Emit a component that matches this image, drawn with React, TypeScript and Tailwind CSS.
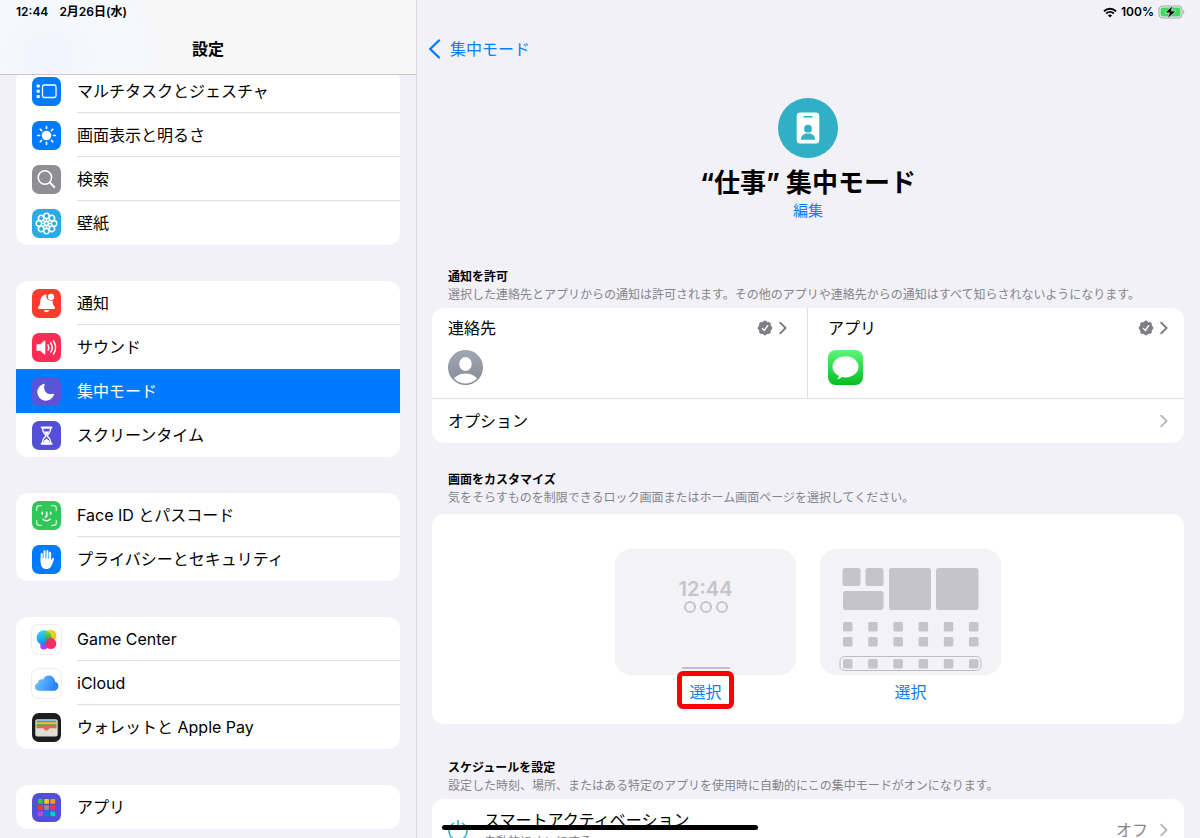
import React from "react";
import clsx from "clsx";

interface SidebarItem {
  label: string;
  icon: React.ReactNode;
  bg: string;
  selected?: boolean;
}

const MultitaskIcon = () => (
  <svg viewBox="0 0 29 29" className="size-full" fill="none">
    <rect x="10.5" y="8" width="13.5" height="12.5" rx="1.8" stroke="#fff" strokeWidth="1.3" />
    <g fill="#fff">
      <rect x="4.6" y="7.6" width="3.2" height="3" rx="0.8" />
      <rect x="4.6" y="12.8" width="3.2" height="3" rx="0.8" />
      <rect x="4.6" y="18" width="3.2" height="3" rx="0.8" />
    </g>
  </svg>
);

const BrightnessIcon = () => (
  <svg viewBox="0 0 29 29" className="size-full">
    <circle cx="14.5" cy="14.5" r="4.8" fill="#fff" />
    <g stroke="#fff" strokeWidth="1.6" strokeLinecap="round">
      {[0, 45, 90, 135, 180, 225, 270, 315].map((angle) => (
        <path key={angle} d="M14.5 5.6v2" transform={`rotate(${angle} 14.5 14.5)`} />
      ))}
    </g>
  </svg>
);

const SearchIcon = () => (
  <svg viewBox="0 0 29 29" className="size-full" fill="none" stroke="#fff" strokeLinecap="round">
    <circle cx="12.9" cy="12.5" r="6.7" strokeWidth="1.6" />
    <path d="M17.9 17.6l4.4 4.4" strokeWidth="2" />
  </svg>
);

const WallpaperIcon = () => (
  <svg viewBox="0 0 29 29" className="size-full" fill="none" stroke="#fff">
    {[0, 45, 90, 135, 180, 225, 270, 315].map((angle) => (
      <g key={angle} transform={`rotate(${angle} 14.5 14.5)`}>
        <circle cx="14.5" cy="6.9" r="2.7" strokeWidth="1.5" />
        <path d="M14.5 9.6v3.4" strokeWidth="1.6" />
      </g>
    ))}
    <circle cx="14.5" cy="14.5" r="1.9" strokeWidth="1.3" />
  </svg>
);

const BellIcon = () => (
  <svg viewBox="0 0 29 29" className="size-full">
    <path
      d="M14 5.6c-4 .6-5.5 3.3-5.6 6.4-.1 3.5-.9 4.6-2.1 6-.7.9-.3 1.900.7 1.900h15c1 0 1.400-1 .7-1.900-1.400-1.600-2.100-3-2.100-6.200L19 11.500c-3 .5-5.300-2.200-4.400-5.900z"
      fill="#fff"
    />
    <circle cx="19" cy="7.9" r="3.100" fill="#fff" />
    <path d="M11.800 21.300h5.400c-.3 1.300-1.400 2-2.700 2s-2.400-.7-2.700-2z" fill="#fff" />
  </svg>
);

const SoundIcon = () => (
  <svg viewBox="0 0 29 29" className="size-full" fill="none" stroke="#fff" strokeLinecap="round">
    <path
      d="M4.5 12.300c0-.6.4-1 1-1h2.700l4-3.500c.5-.4 1.100-.1 1.100.5v12.400c0 .6-.6.9-1.100.5l-4-3.500H5.500c-.6 0-1-.4-1-1z"
      fill="#fff"
      stroke="none"
    />
    <path
      d="M16 11.800c.9 1.600.9 3.800 0 5.400M18.700 9.900c1.800 2.800 1.800 6.400 0 9.200M21.500 8c2.600 4 2.600 9 0 13"
      strokeWidth="1.5"
    />
  </svg>
);

const MoonIcon = () => (
  <svg viewBox="0 0 29 29" className="size-full">
    <path
      d="M12 6.7c.5-.2.9.2.7.7-2.3 5.800 2.500 11.300 8.700 9.300.6-.2 1 .3.700.8A8.600 8.600 0 1 1 12 6.700z"
      fill="#fff"
    />
  </svg>
);

const HourglassIcon = () => (
  <svg viewBox="0 0 29 29" className="size-full" fill="none">
    <path d="M9.800 6.500h9.600M9.800 22.700h9.600" stroke="#fff" strokeWidth="2.2" strokeLinecap="round" />
    <path
      d="M10.600 6.800c0 4 .7 5 3.100 7.100v1.500c-2.400 2-3.100 3-3.100 7.100h8c0-4.100-.7-5.100-3.100-7.100v-1.500c2.400-2.100 3.100-3.100 3.100-7.100z"
      stroke="#fff"
      strokeWidth="1.5"
    />
    <path d="M11.800 10.600h5.600l-2.400 3h-.8zM14.600 17.600l2.800 2.400v1.700h-5.600V20z" fill="#fff" />
  </svg>
);

const FaceIdIcon = () => (
  <svg viewBox="0 0 29 29" className="size-full" fill="none" stroke="#fff" strokeLinecap="round">
    <path
      d="M4.700 9.500V7.200c0-1.500 1-2.500 2.500-2.500h2.300M19.500 4.700h2.300c1.500 0 2.500 1 2.500 2.500v2.300M24.300 19.500v2.300c0 1.500-1 2.500-2.500 2.500h-2.300M9.500 24.300H7.200c-1.500 0-2.500-1-2.500-2.500v-2.300"
      strokeWidth="1.3"
      opacity="0.75"
    />
    <path
      d="M10.300 11.200v1.700M18.700 11.200v1.700M14.700 11.200v3.700c0 .7-.3 1-1.200 1M11 18.300c1.900 1.900 5.100 1.900 7 0"
      strokeWidth="1.6"
    />
  </svg>
);

const HandIcon = () => (
  <svg viewBox="0 0 29 29" className="size-full" fill="none" stroke="#fff" strokeLinecap="round">
    <path d="M9.700 9v8M12.500 6.300v9M15.400 6v9M18.100 7.900v8" strokeWidth="2.1" />
    <path
      d="M8.700 13v4.500c0 4 2 6.500 5.600 6.500 3 0 4.600-1.300 5.600-4l2.200-5.700c.4-1.200-1.200-1.800-1.900-.8l-1.500 2.300V14z"
      fill="#fff"
      stroke="none"
    />
  </svg>
);

const GameCenterIcon = () => (
  <svg viewBox="0 0 29 29" className="size-full">
    <defs>
      <linearGradient id="gcBlue" x1="0" y1="0" x2="0.3" y2="1">
        <stop offset="0" stopColor="#35dfe5" />
        <stop offset="1" stopColor="#1788f5" />
      </linearGradient>
      <linearGradient id="gcYellow" x1="0" y1="0" x2="1" y2="1">
        <stop offset="0" stopColor="#e3ef22" />
        <stop offset="1" stopColor="#ffb016" />
      </linearGradient>
      <linearGradient id="gcGreen" x1="0" y1="0" x2="0" y2="1">
        <stop offset="0" stopColor="#8ee52e" />
        <stop offset="1" stopColor="#239b56" />
      </linearGradient>
      <clipPath id="gcClip">
        <circle cx="12" cy="12.7" r="7.400" />
      </clipPath>
    </defs>
    <circle cx="11.800" cy="21" r="3.600" fill="#a63ff5" />
    <circle cx="18.500" cy="10.300" r="5.900" fill="url(#gcYellow)" />
    <circle cx="12" cy="12.700" r="7.400" fill="url(#gcBlue)" />
    <circle cx="18.500" cy="10.300" r="5.900" fill="url(#gcGreen)" clipPath="url(#gcClip)" />
    <circle cx="18.800" cy="18.600" r="5.500" fill="#ff2d62" />
    <path
      d="M13.600 17.200c1.100-3.300 4.500-4.800 8-3.300-1.600 2.800-4 4.600-7.700 5.800z"
      fill="#c93b64"
      opacity="0.6"
    />
  </svg>
);

const CloudIcon = () => (
  <svg viewBox="0 0 29 29" className="size-full">
    <defs>
      <linearGradient id="cloud" x1="0" y1="0" x2="1" y2="0.3">
        <stop offset="0" stopColor="#7cc9ff" />
        <stop offset="1" stopColor="#2584f7" />
      </linearGradient>
    </defs>
    <path
      d="M7.300 21.800c-2.500 0-4.400-1.700-4.400-4.100 0-2 1.300-3.500 3.100-4 .1-2.500 2.600-4.200 5-3.300 1.200-2.300 3.200-3.800 5.700-3.800 3.600 0 6.300 2.700 6.400 6.200 2 .5 3.300 2.200 3.300 4.400 0 2.600-2 4.600-4.600 4.600z"
      fill="url(#cloud)"
    />
  </svg>
);

const WalletIcon = () => (
  <svg viewBox="0 0 29 29" className="size-full">
    <rect x="3.300" y="6.300" width="22.400" height="17.200" rx="2" fill="#e0ddd2" />
    <path d="M4.500 9.800v-1c0-.8.500-1.300 1.300-1.300h17.400c.8 0 1.300.5 1.300 1.300v1z" fill="#329fe5" />
    <path d="M4.500 9.300h20V12h-20z" fill="#f9b91c" />
    <path d="M4.500 11.300h20V14h-20z" fill="#4caf4b" />
    <path
      d="M4.500 13.300h20v1.900h-6.200c-1 0-1.100.5-1.500 1.100-.6.900-1.300 1.200-2.300 1.200s-1.700-.3-2.300-1.200c-.4-.6-.5-1.100-1.500-1.100H4.500z"
      fill="#f06258"
    />
  </svg>
);

const appColors = [
  "#30c452", "#f9c80e", "#f99b10",
  "#ff3b20", "#8e8e93", "#ff2d50",
  "#b34be2", "#087cf5", "#09cbd0",
];

const AppsIcon = () => (
  <svg viewBox="0 0 29 29" className="size-full">
    {appColors.map((color, i) => (
      <rect
        key={color}
        x={6 + (i % 3) * 6.2}
        y={6 + Math.floor(i / 3) * 6.2}
        width="4.800"
        height="4.800"
        rx="0.800"
        fill={color}
      />
    ))}
  </svg>
);

const groups: SidebarItem[][] = [
  [
    { label: "マルチタスクとジェスチャ", icon: <MultitaskIcon />, bg: "bg-[#007aff]" },
    { label: "画面表示と明るさ", icon: <BrightnessIcon />, bg: "bg-[#007aff]" },
    { label: "検索", icon: <SearchIcon />, bg: "bg-[#8e8e93]" },
    { label: "壁紙", icon: <WallpaperIcon />, bg: "bg-[#2caae2]" },
  ],
  [
    { label: "通知", icon: <BellIcon />, bg: "bg-[#ff3b30]" },
    { label: "サウンド", icon: <SoundIcon />, bg: "bg-[#ff2d55]" },
    { label: "集中モード", icon: <MoonIcon />, bg: "bg-[#5856d6]", selected: true },
    { label: "スクリーンタイム", icon: <HourglassIcon />, bg: "bg-[#5450d6]" },
  ],
  [
    { label: "Face ID とパスコード", icon: <FaceIdIcon />, bg: "bg-[#30c759]" },
    { label: "プライバシーとセキュリティ", icon: <HandIcon />, bg: "bg-[#007aff]" },
  ],
  [
    { label: "Game Center", icon: <GameCenterIcon />, bg: "bg-white ring-1 ring-[#efedf0]" },
    { label: "iCloud", icon: <CloudIcon />, bg: "bg-white ring-1 ring-[#efedf0]" },
    { label: "ウォレットと Apple Pay", icon: <WalletIcon />, bg: "bg-[#1d1d1f]" },
  ],
  [{ label: "アプリ", icon: <AppsIcon />, bg: "bg-[#5450d6]" }],
];

const Chevron = ({ className }: { className?: string }) => (
  <svg viewBox="0 0 8 14" className={clsx("w-2 h-3.5 shrink-0", className)} fill="none">
    <path
      d="M1.200 1.700L6.600 7l-5.400 5.300"
      stroke="currentColor"
      strokeWidth="1.8"
      strokeLinecap="round"
      strokeLinejoin="round"
    />
  </svg>
);

const VerifiedBadge = () => (
  <svg viewBox="0 0 16 16" className="size-4 shrink-0">
    <g fill="#7f7f84">
      <circle cx="8" cy="8" r="6.300" />
      {[0, 45, 90, 135, 180, 225, 270, 315].map((angle) => (
        <circle key={angle} cx="8" cy="2.700" r="2.100" transform={`rotate(${angle} 8 8)`} />
      ))}
    </g>
    <path
      d="M5.400 8.400l1.900 2.100 3.300-4.800"
      fill="none"
      stroke="#fff"
      strokeWidth="1.4"
      strokeLinecap="round"
      strokeLinejoin="round"
    />
  </svg>
);

const StatusIcons = () => (
  <div className="flex items-center gap-1 text-[12px] font-semibold">
    <svg viewBox="0 0 14 11" className="w-3.5 h-[11px]" fill="none" stroke="#000">
      <path d="M1 4.200C4.400.9 9.600.9 13 4.200" strokeWidth="1.9" />
      <path d="M3.200 6.500c2.200-2 5.400-2 7.600 0" strokeWidth="1.9" />
      <path d="M7 10.600L4.900 8.400c1.200-1.100 3-1.100 4.200 0z" fill="#000" stroke="none" />
    </svg>
    <span>100%</span>
    <svg viewBox="0 0 27 14" className="w-[27px] h-3.5">
      <rect x="1" y="1" width="23" height="12" rx="3.600" fill="none" stroke="#a5a5a9" />
      <rect x="2.500" y="2.500" width="20" height="9" rx="2.300" fill="#3fdc62" />
      <path d="M25.200 5c1.400.5 1.400 3.500 0 4z" fill="#a5a5a9" />
      <path
        d="M15 .4L7 7.800h4.500L9.500 13.600l8.400-7.500h-4.700z"
        fill="#000"
        stroke="#f2f1f7"
        strokeWidth="0.6"
      />
    </svg>
  </div>
);

const SidebarRow = ({ item, divider }: { item: SidebarItem; divider: boolean }) => (
  <a
    href="#"
    aria-current={item.selected ? "page" : undefined}
    className={clsx("flex h-11 items-center gap-4 pl-4", item.selected && "bg-[#007aff] text-white")}
  >
    <span className={clsx("block size-[29px] shrink-0 overflow-hidden rounded-[7px]", item.bg)}>
      {item.icon}
    </span>
    <span
      className={clsx(
        "flex h-full flex-1 items-center border-b",
        divider ? "border-[#dedee1]" : "border-transparent"
      )}
    >
      {item.label}
    </span>
  </a>
);

const Sidebar = () => (
  <aside className="flex w-[416px] shrink-0 flex-col overflow-hidden">
    <header className="z-10 shrink-0 border-b border-[#c9c9cd] bg-[#f7f7f8] bg-[radial-gradient(circle_at_48px_56px,#eff5fe_0,#f5f8fc_50px,#f7f7f8_120px)]">
      <div className="flex h-6 items-center gap-[11px] pl-4 text-[12px] font-semibold">
        <span>12:44</span>
        <span>2月26日(水)</span>
      </div>
      <h1 className="flex h-[50px] items-center justify-center text-[16px] font-bold">設定</h1>
    </header>
    <nav className="-mt-1.5 flex flex-col gap-9 px-4">
      {groups.map((group, g) => (
        <div key={g} className="overflow-hidden rounded-xl bg-white">
          {group.map((item, i) => (
            <SidebarRow
              key={item.label}
              item={item}
              divider={i < group.length - 1 && !item.selected && !group[i + 1].selected}
            />
          ))}
        </div>
      ))}
    </nav>
  </aside>
);

const SectionTitle = ({ title, text }: { title: string; text: string }) => (
  <div className="px-4 text-[12px] leading-[18px]">
    <h3 className="font-bold">{title}</h3>
    <p className="whitespace-nowrap text-[#85858b]">{text}</p>
  </div>
);

const LockScreenPreview = () => (
  <div className="flex h-[126px] w-[181px] flex-col items-center rounded-2xl bg-[#f3f3f5] pt-7">
    <div className="text-[20px] leading-6 font-semibold text-[#c5c4ca]">12:44</div>
    <div className="flex gap-1">
      <span className="size-3 rounded-full border-2 border-[#c5c4ca]" />
      <span className="size-3 rounded-full border-2 border-[#c5c4ca]" />
      <span className="size-3 rounded-full border-2 border-[#c5c4ca]" />
    </div>
    <div className="mt-auto mb-1.5 h-0.5 w-12 bg-[#b9c2ce]" />
  </div>
);

const HomeScreenPreview = () => (
  <div className="h-[126px] w-[181px] rounded-2xl bg-[#f3f3f5]">
    <svg viewBox="0 0 181 126" className="size-full" fill="#c5c4cb">
      <rect x="22.500" y="19" width="18" height="18" rx="2.500" />
      <rect x="45.500" y="19" width="18" height="18" rx="2.500" />
      <rect x="23" y="42" width="40.500" height="19" rx="2.500" />
      <rect x="69" y="19" width="42" height="42" rx="2.500" />
      <rect x="116" y="19" width="42.500" height="42" rx="2.500" />
      {[73, 88, 110].map((y) =>
        [0, 1, 2, 3, 4, 5].map((col) => (
          <rect key={`${y}-${col}`} x={23 + col * 25.2} y={y} width="9.500" height="9.500" rx="1.500" />
        ))
      )}
      <rect x="20" y="107.500" width="141" height="14" rx="4.500" fill="none" stroke="#bdbcc3" />
    </svg>
  </div>
);

const App = () => {
  return (
    <div
      lang="ja"
      className="relative flex h-screen overflow-hidden bg-[#f2f1f7] font-[Inter,'Noto_Sans_CJK_JP',sans-serif] text-[16px] text-black"
    >
      <Sidebar />
      <main className="flex min-w-0 flex-1 flex-col shadow-[inset_1px_0_0_#d9d9de]">
        <div className="flex h-6 shrink-0 items-center justify-end pr-[15px]">
          <StatusIcons />
        </div>
        <div className="flex h-[50px] shrink-0 items-center pl-3">
          <a href="#" className="flex items-center gap-[9px] text-[#087cff]">
            <svg viewBox="0 0 13 20" className="h-5 w-[13px]" fill="none">
              <path
                d="M11 1.500L2.200 10l8.800 8.500"
                stroke="currentColor"
                strokeWidth="2.4"
                strokeLinecap="round"
                strokeLinejoin="round"
              />
            </svg>
            集中モード
          </a>
        </div>

        <div className="px-4 pt-6">
          <div className="flex flex-col items-center">
            <svg viewBox="0 0 60 60" className="size-[60px]">
              <circle cx="30" cy="30" r="30" fill="#30afc6" />
              <rect x="18.700" y="14.500" width="22.600" height="31" rx="3.500" fill="#fff" />
              <path d="M26 18.800h8" stroke="#30afc6" strokeWidth="1.5" strokeLinecap="round" />
              <circle cx="30" cy="30.700" r="3.900" fill="#30afc6" />
              <path d="M22.800 41.800c.4-4.500 3-6.300 7.200-6.300s6.800 1.800 7.200 6.300z" fill="#30afc6" />
            </svg>
            <h2 className="mt-2 text-[26px] leading-[34px] font-bold">“仕事” 集中モード</h2>
            <button className="mt-px text-[15px] leading-5 text-[#087cff]">編集</button>
          </div>

          <section className="mt-[47px] flex flex-col gap-1">
            <SectionTitle
              title="通知を許可"
              text="選択した連絡先とアプリからの通知は許可されます。その他のアプリや連絡先からの通知はすべて知らされないようになります。"
            />
            <div className="overflow-hidden rounded-xl bg-white">
              <div className="grid grid-cols-2 border-b border-[#dedee1]">
                <button className="flex h-[90px] flex-col gap-2.5 border-r border-[#dedee1] pt-2 pr-5 pl-4 text-start">
                  <span className="flex w-full items-center gap-1.5">
                    <span className="flex-1">連絡先</span>
                    <VerifiedBadge />
                    <Chevron className="text-[#77777c]" />
                  </span>
                  <svg viewBox="0 0 35 35" className="size-[35px]">
                    <defs>
                      <linearGradient id="avatar" x1="0" y1="0" x2="0" y2="1">
                        <stop offset="0" stopColor="#a2a7b4" />
                        <stop offset="1" stopColor="#858a97" />
                      </linearGradient>
                      <clipPath id="avatarClip">
                        <circle cx="17.500" cy="17.500" r="16" />
                      </clipPath>
                    </defs>
                    <circle cx="17.500" cy="17.500" r="17.500" fill="url(#avatar)" />
                    <g fill="#fff" clipPath="url(#avatarClip)">
                      <ellipse cx="17.500" cy="14" rx="6.200" ry="7" />
                      <ellipse cx="17.500" cy="32" rx="12.500" ry="8.500" />
                    </g>
                  </svg>
                </button>
                <button className="flex h-[90px] flex-col gap-2.5 pt-2 pr-4 pl-5 text-start">
                  <span className="flex w-full items-center gap-1.5">
                    <span className="flex-1">アプリ</span>
                    <VerifiedBadge />
                    <Chevron className="text-[#77777c]" />
                  </span>
                  <svg viewBox="0 0 35 35" className="size-[35px]">
                    <defs>
                      <linearGradient id="messages" x1="0" y1="0" x2="0" y2="1">
                        <stop offset="0" stopColor="#5df777" />
                        <stop offset="1" stopColor="#06bc22" />
                      </linearGradient>
                    </defs>
                    <rect width="35" height="35" rx="7.500" fill="url(#messages)" />
                    <path
                      d="M17.500 6.200c7.200 0 13 4.700 13 10.600s-5.800 10.600-13 10.600c-1.200 0-2.400-.1-3.500-.4-1.200 1.100-2.900 2-4.800 2.200 1-.9 1.600-2.100 1.600-3.500-3.800-1.900-6.300-5.200-6.300-8.900 0-5.900 5.800-10.600 13-10.600z"
                      fill="#fff"
                    />
                  </svg>
                </button>
              </div>
              <button className="flex h-11 w-full items-center justify-between px-4">
                <span>オプション</span>
                <Chevron className="text-[#b5b5ba]" />
              </button>
            </div>
          </section>

          <section className="mt-7 flex flex-col gap-[7px]">
            <SectionTitle
              title="画面をカスタマイズ"
              text="気をそらすものを制限できるロック画面またはホーム画面ページを選択してください。"
            />
            <div className="flex justify-center gap-6 rounded-xl bg-white pt-[35px] pb-5">
              <div className="flex flex-col items-center gap-[5px]">
                <LockScreenPreview />
                <button className="relative leading-6 text-[#087cff]">
                  選択
                  <span className="absolute -inset-x-3 -top-[9px] -bottom-[5px] rounded-md border-[5px] border-[#fb0007]" />
                </button>
              </div>
              <div className="flex flex-col items-center gap-[5px]">
                <HomeScreenPreview />
                <button className="leading-6 text-[#087cff]">選択</button>
              </div>
            </div>
          </section>

          <section className="mt-[35px] flex flex-col gap-1">
            <SectionTitle
              title="スケジュールを設定"
              text="設定した時刻、場所、またはある特定のアプリを使用時に自動的にこの集中モードがオンになります。"
            />
            <button className="flex h-[62px] w-full items-center gap-4 rounded-xl bg-white px-4 text-start">
              <svg
                viewBox="0 0 20 22"
                className="h-[22px] w-5"
                fill="none"
                stroke="#30afc6"
                strokeWidth="1.6"
                strokeLinecap="round"
              >
                <path d="M10 1.500v9M5.500 4.400a9 9 0 1 0 9 0" />
              </svg>
              <span className="flex flex-1 flex-col">
                <span className="leading-6">スマートアクティベーション</span>
                <span className="text-[12px] leading-5 text-[#85858b]">自動的にオンにする</span>
              </span>
              <span className="flex items-center gap-3 text-[#85858b]">
                オフ
                <Chevron className="text-[#b5b5ba]" />
              </span>
            </button>
          </section>
        </div>
      </main>
      <div className="absolute bottom-2 left-1/2 z-20 h-[5px] w-[316px] -translate-x-1/2 rounded-full bg-black" />
    </div>
  );
};

export default App;
